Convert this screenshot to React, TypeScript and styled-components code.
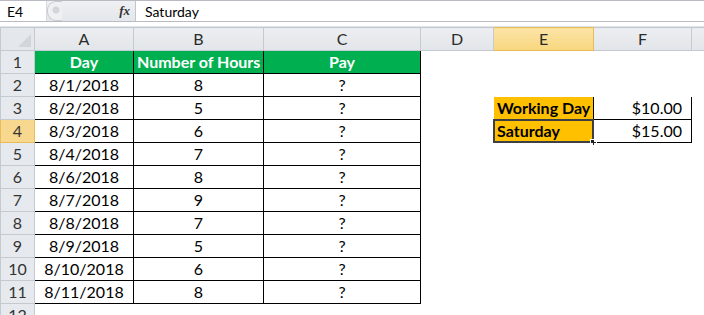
import React from "react";
import styled, { createGlobalStyle, css } from "styled-components";

const GlobalStyle = createGlobalStyle`
    html, body {
        margin: 0;
        padding: 0;
        background: #ffffff;
        overflow: hidden;
    }
    body {
        font-family: Lato, "Liberation Sans", sans-serif;
        color: #000;
    }
`;

const font = `Lato, "Liberation Sans", sans-serif`;

// G is only a sliver at the right edge, its letter sits off-screen
const COLUMNS = [
    { key: "A", label: "A", width: 99 },
    { key: "B", label: "B", width: 130 },
    { key: "C", label: "C", width: 157 },
    { key: "D", label: "D", width: 73 },
    { key: "E", label: "E", width: 100 },
    { key: "F", label: "F", width: 98 },
    { key: "G", label: "", width: 80 },
];

type CellValue = {
    text?: string;
    fill?: string;
    bold?: boolean;
    color?: string;
    align?: "left" | "center" | "right";
    boxed?: boolean;
    selected?: boolean;
};

const hours = [8, 5, 6, 7, 8, 9, 7, 5, 6, 8];
const dates = ["8/1/2018", "8/2/2018", "8/3/2018", "8/4/2018", "8/6/2018", "8/7/2018", "8/8/2018", "8/9/2018", "8/10/2018", "8/11/2018"];

function buildRows(): CellValue[][] {
    const rows: CellValue[][] = [];
    const green = { fill: "#00b050", bold: true, color: "#ffffff", align: "center" as const, boxed: true };
    rows.push([{ ...green, text: "Day" }, { ...green, text: "Number of Hours" }, { ...green, text: "Pay" }, {}, {}, {}, {}]);
    dates.forEach((d, i) => {
        const row: CellValue[] = [
            { text: d, align: "center", boxed: true },
            { text: String(hours[i]), align: "center", boxed: true },
            { text: "?", align: "center", boxed: true },
            {},
            {},
            {},
            {},
        ];
        if (i === 1) {
            row[4] = { text: "Working Day", fill: "#ffc000", bold: true, align: "left", boxed: true };
            row[5] = { text: "$10.00", align: "right", boxed: true };
        }
        if (i === 2) {
            row[4] = { text: "Saturday", fill: "#ffc000", bold: true, align: "left", boxed: true, selected: true };
            row[5] = { text: "$15.00", align: "right", boxed: true };
        }
        rows.push(row);
    });
    rows.push([{}, {}, {}, {}, {}, {}, {}]);
    return rows;
}

export default function App() {
    const rows = buildRows();
    return (
        <>
            <GlobalStyle />
            <Window>
                <FormulaBar>
                    <NameBox>E4</NameBox>
                    <FxArea>
                        <Grip />
                        <Fx>fx</Fx>
                    </FxArea>
                    <FormulaInput>Saturday</FormulaInput>
                </FormulaBar>
                <Spacer />
                <Sheet>
                    <colgroup>
                        <col style={{ width: 34 }} />
                        {COLUMNS.map((c) => (
                            <col key={c.key} style={{ width: c.width }} />
                        ))}
                    </colgroup>
                    <thead>
                        <tr>
                            <Corner>
                                <CornerTriangle />
                            </Corner>
                            {COLUMNS.map((c) => (
                                <ColHead key={c.key} $active={c.key === "E"}>
                                    {c.label}
                                </ColHead>
                            ))}
                        </tr>
                    </thead>
                    <tbody>
                        {rows.map((row, r) => (
                            <tr key={r}>
                                <RowHead $active={r === 3}>{r + 1}</RowHead>
                                {row.map((cell, c) => (
                                    <Cell
                                        key={c}
                                        $fill={cell.fill}
                                        $bold={cell.bold}
                                        $color={cell.color}
                                        $align={cell.align}
                                        $boxed={cell.boxed}
                                    >
                                        {cell.text}
                                        {cell.selected && (
                                            <>
                                                <SelectionFrame />
                                                <FillHandle />
                                            </>
                                        )}
                                    </Cell>
                                ))}
                            </tr>
                        ))}
                    </tbody>
                </Sheet>
            </Window>
        </>
    );
}

const Window = styled.div`
    width: 704px;
    height: 315px;
    overflow: hidden;
    background: #ffffff;
`;

const FormulaBar = styled.div`
    display: flex;
    height: 20px;
    border-top: 1px solid #b8bcc2;
    border-bottom: 1px solid #b8bcc2;
    font-family: ${font};
    font-size: 14px;
`;

const NameBox = styled.div`
    width: 39px;
    padding-left: 7px;
    display: flex;
    align-items: center;
    background: #ffffff;
    border-right: 1px solid #d6d9de;
`;

const FxArea = styled.div`
    width: 83px;
    display: flex;
    align-items: center;
    justify-content: space-between;
    padding-right: 5px;
    background: linear-gradient(#eef0f3, #e4e7eb);
    border-right: 1px solid #c2c6cc;
`;

const Grip = styled.div`
    width: 14px;
    height: 18px;
    border-radius: 9px 0 0 9px;
    border: 1px solid #c9ccd1;
    border-right: none;
    background: radial-gradient(circle at 8px 8px, #d2d5d9 0, #d2d5d9 3px, #eef0f2 4px);
`;

const Fx = styled.span`
    font-family: "Liberation Serif", serif;
    font-style: italic;
    font-weight: bold;
    font-size: 13px;
    color: #333;
`;

const FormulaInput = styled.div`
    flex: 1;
    display: flex;
    align-items: center;
    padding-left: 9px;
    background: #ffffff;
`;

const Spacer = styled.div`
    height: 4px;
    border-bottom: 1px solid #dfe2e6;
`;

const Sheet = styled.table`
    border-collapse: collapse;
    table-layout: fixed;
    width: 771px;
    font-family: ${font};
    font-size: 16px;
`;

const headBase = css`
    height: 22px;
    padding: 0;
    font-weight: normal;
    color: #2b2b2b;
    text-align: center;
    border: 1px solid #c5cad1;
    line-height: 22px;
`;

const Corner = styled.th`
    ${headBase};
    position: relative;
    background: #e4e7eb;
`;

const CornerTriangle = styled.div`
    position: absolute;
    right: 3px;
    bottom: 3px;
    width: 0;
    height: 0;
    border-left: 13px solid transparent;
    border-bottom: 13px solid #d2d5da;
`;

const ColHead = styled.th<{ $active?: boolean }>`
    ${headBase};
    background: ${(p) => (p.$active ? "linear-gradient(#fbe4a6, #f8d77f)" : "linear-gradient(#eceef1, #e2e5e9)")};
    border-color: ${(p) => (p.$active ? "#e7bc5a" : "#c5cad1")};
`;

const RowHead = styled.td<{ $active?: boolean }>`
    ${headBase};
    background: ${(p) => (p.$active ? "#f8d88f" : "#e6e9ed")};
    border-color: ${(p) => (p.$active ? "#e7bc5a" : "#c5cad1")};
    color: #333;
`;

const Cell = styled.td<{
    $fill?: string;
    $bold?: boolean;
    $color?: string;
    $align?: "left" | "center" | "right";
    $boxed?: boolean;
}>`
    position: relative;
    height: 22px;
    padding: ${(p) => (p.$align === "right" ? "0 9px 0 3px" : "0 3px")};
    line-height: 22px;
    white-space: nowrap;
    overflow: visible;
    background: ${(p) => p.$fill ?? "#ffffff"};
    color: ${(p) => p.$color ?? "#000"};
    font-weight: ${(p) => (p.$bold ? 700 : 400)};
    text-align: ${(p) => p.$align ?? "left"};
    border: ${(p) => (p.$boxed ? "1px solid #000" : "1px solid transparent")};
`;

const SelectionFrame = styled.div`
    position: absolute;
    inset: -1px;
    border: 2px solid #3c3f44;
    pointer-events: none;
`;

const FillHandle = styled.div`
    position: absolute;
    right: -4px;
    bottom: -4px;
    width: 5px;
    height: 5px;
    background: #222;
    border: 1px solid #ffffff;
`;
